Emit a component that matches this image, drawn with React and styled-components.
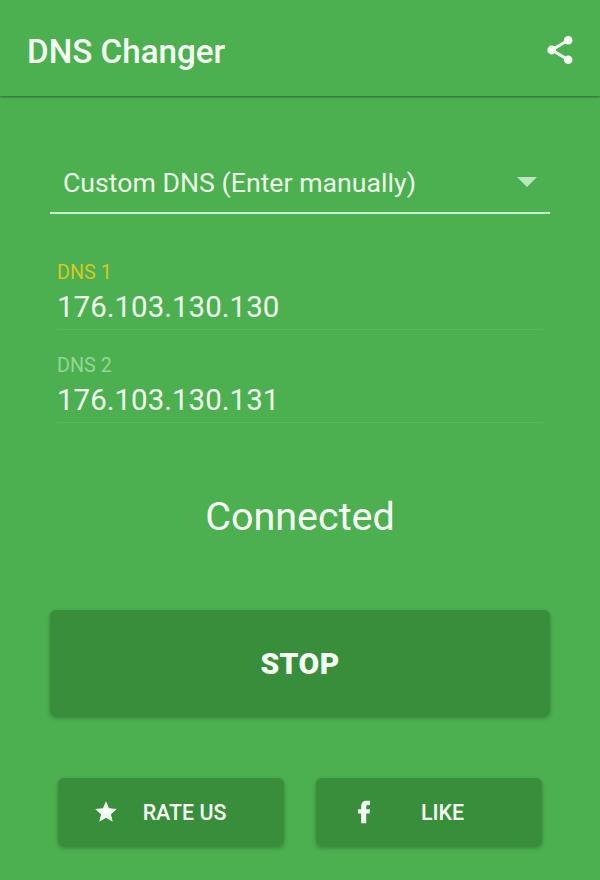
import React from 'react';
import styled, { createGlobalStyle } from 'styled-components';

const Global = createGlobalStyle`
  * { box-sizing: border-box; }
  body { margin: 0; background: #4caf50; font-family: Roboto, sans-serif; color: #f6fff4; }
`;
const Screen = styled.div`
  width: 600px; height: 880px; background: #4caf50; display: flex; flex-direction: column; overflow: hidden;
`;
const Toolbar = styled.header`
  height: 96px; flex: none; display: flex; align-items: center; justify-content: space-between;
  padding: 8px 26px 0 27px; box-shadow: 0 1px 2px rgba(0, 0, 0, 0.4);
`;
const Title = styled.h1`
  margin: 0; font-size: 33.2px; font-weight: 500; line-height: 40px; white-space: nowrap;
`;
const IconButton = styled.button`
  border: 0; padding: 0 0 4px; background: none; color: #f6fff4; display: flex;
`;
const Content = styled.main`
  display: flex; flex-direction: column; padding: 56px 50px 0;
`;
const Select = styled.div`
  height: 62px; display: flex; align-items: center; justify-content: space-between;
  padding: 0 13px 0 13px; border-bottom: 2px solid #c9f3ca; font-size: 26.7px; white-space: nowrap;
  color: #eafbe8;
`;
const SelectText = styled.span`padding-top: 2px;`;
const Caret = styled.span`
  border: 10px solid transparent; border-top-color: #b9e6bb; border-bottom: 0;
`;
const Fields = styled.div`
  display: flex; flex-direction: column; padding: 47px 7px 0;
`;
const Field = styled.label`
  display: flex; flex-direction: column; height: 92.5px;
`;
const FieldLabel = styled.span`
  font-size: 19.8px; line-height: 24px; color: ${p => (p.$active ? '#d3c828' : '#93d695')};
`;
const Value = styled.span`
  font-size: 29.5px; line-height: 36px; padding-top: 4px; height: 45px; border-bottom: 1px solid #5ab75d;
  color: #f0fdee;
`;
const Status = styled.div`
  margin-top: 47px; text-align: center; font-size: 39.5px; line-height: 48px;
`;
const Button = styled.button`
  border: 0; border-radius: 6px; background: #388e3b; color: #f6fff4; font-family: inherit; padding: 0;
  box-shadow: 0 2px 4px rgba(0, 0, 0, 0.26);
`;
const StopButton = styled(Button)`
  margin-top: 69px; height: 106px; font-size: 30px; font-weight: 900; letter-spacing: 0.4px;
`;
const Actions = styled.div`
  display: grid; grid-template-columns: 226px 226px; column-gap: 32px; margin: 62px 0 0 8px;
`;
const ActionButton = styled(Button)`
  height: 68px; display: grid; grid-template-columns: 84px 85px; align-items: center;
  font-size: 21.4px; font-weight: 500;
`;
const IconSlot = styled.span`display: flex; justify-content: center; padding-left: 11px;`;
const Text = styled.span`text-align: center; white-space: nowrap;`;

export default function App() {
  return (
    <Screen>
      <Global />
      <Toolbar>
        <Title>DNS Changer</Title>
        <IconButton aria-label="Share">
          <svg width="28" height="30" viewBox="0 0 28 30">
            <path d="M22.2 5.3 5.7 15l16.5 9.700" fill="none" stroke="currentColor" strokeWidth="3" />
            <g fill="currentColor">
              <circle cx="22.2" cy="5.3" r="4.3" />
              <circle cx="5.7" cy="15" r="4.4" />
              <circle cx="22.2" cy="24.7" r="4.3" />
            </g>
          </svg>
        </IconButton>
      </Toolbar>
      <Content>
        <Select><SelectText>Custom DNS (Enter manually)</SelectText><Caret /></Select>
        <Fields>
          <Field><FieldLabel $active>DNS 1</FieldLabel><Value>176.103.130.130</Value></Field>
          <Field><FieldLabel>DNS 2</FieldLabel><Value>176.103.130.131</Value></Field>
        </Fields>
        <Status>Connected</Status>
        <StopButton>STOP</StopButton>
        <Actions>
          <ActionButton>
            <IconSlot>
              <svg width="26" height="26" viewBox="0 0 24 24" fill="currentColor">
                <path d="M12 17.27L18.18 21l-1.64-7.03L22 9.24l-7.19-.61L12 2 9.19 8.63 2 9.24l5.46 4.73L5.82 21z" />
              </svg>
            </IconSlot>
            <Text>RATE US</Text>
          </ActionButton>
          <ActionButton>
            <IconSlot>
              <svg width="14" height="24" viewBox="0 0 14 24" fill="currentColor">
                <path d="M4.200 23.300V13.600H1V9.300h3.200V6.200C4.200 2.700 6 .8 9.300.8H13v4.100h-2.200c-1.300 0-1.600.6-1.600 1.700v2.700H13l-.5 4.300H9.200v9.700z" />
              </svg>
            </IconSlot>
            <Text>LIKE</Text>
          </ActionButton>
        </Actions>
      </Content>
    </Screen>
  );
}
